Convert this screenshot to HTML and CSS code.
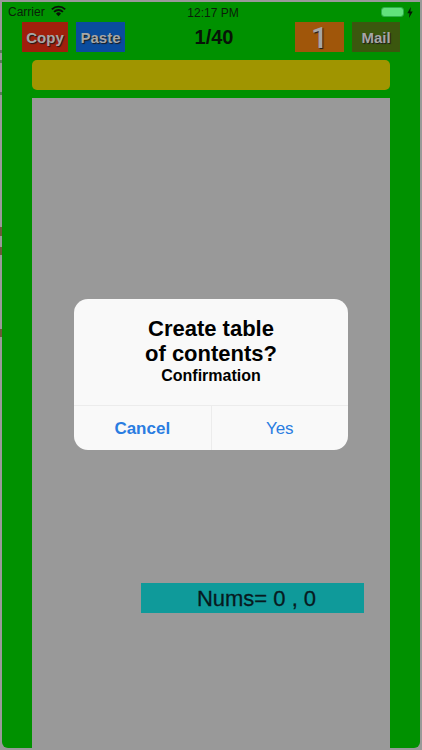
FILE: index.html
```html
<!DOCTYPE html>
<html lang="en">
<head>
<meta charset="utf-8">
<title>Create table of contents</title>
<link rel="stylesheet" href="styles.css">
</head>
<body>
<div class="edge-marks"></div>
<div class="screen">
  <div class="status">
    <div class="status-left">
      <span>Carrier</span>
      <svg class="wifi" viewBox="0 0 16 12" width="15" height="12"><path d="M8 11.6 5.3 8.8a3.8 3.8 0 0 1 5.4 0Z" fill="#071407"/><path d="M3.3 6.9a6.6 6.6 0 0 1 9.4 0" fill="none" stroke="#071407" stroke-width="2"/><path d="M.9 4.3a10 10 0 0 1 14.2 0" fill="none" stroke="#071407" stroke-width="2"/></svg>
    </div>
    <div class="status-time">12:17 PM</div>
    <div class="status-right">
      <span class="battery"><span class="battery-fill"></span></span>
      <svg class="bolt" viewBox="0 0 6 11" width="6" height="11"><path d="M3.8 0 .3 6.2h2.2L2 11l3.7-6.6H3.4Z" fill="#071407"/></svg>
    </div>
  </div>
  <div class="toolbar">
    <div class="tool-group">
      <div class="btn btn-copy">Copy</div>
      <div class="btn btn-paste">Paste</div>
    </div>
    <div class="counter">1/40</div>
    <div class="tool-group">
      <div class="btn btn-one">1</div>
      <div class="btn btn-mail">Mail</div>
    </div>
  </div>
  <div class="title-bar"></div>
  <div class="panel">
    <div class="nums">Nums= 0 , 0</div>
  </div>
</div>
<div class="alert">
  <div class="alert-body">
    <div class="alert-title">Create table<br>of contents?</div>
    <div class="alert-msg">Confirmation</div>
  </div>
  <div class="alert-actions">
    <div class="action action-cancel">Cancel</div>
    <div class="action">Yes</div>
  </div>
</div>
</body>
</html>
```
FILE: styles.css
```css
* { box-sizing: border-box; }
html, body { margin: 0; height: 100%; }
body {
  background: #999999;
  font-family: "Liberation Sans", Arial, sans-serif;
  padding: 2px;
  overflow: hidden;
}
.edge-marks {
  position: absolute;
  left: 0;
  top: 0;
  width: 2px;
  height: 750px;
  background:
    linear-gradient(#6b5a3a, #6b5a3a) 0 227px / 2px 9px no-repeat,
    linear-gradient(#6b5a3a, #6b5a3a) 0 247px / 2px 8px no-repeat,
    linear-gradient(#6b5a3a, #6b5a3a) 0 329px / 2px 8px no-repeat,
    linear-gradient(#5a7a5a, #5a7a5a) 0 50px / 2px 3px no-repeat,
    linear-gradient(#5a7a5a, #5a7a5a) 0 60px / 2px 3px no-repeat,
    linear-gradient(#5a7a5a, #5a7a5a) 0 92px / 2px 3px no-repeat;
}
.screen {
  height: 746px;
  background: #009100;
  border-radius: 0 0 6px 6px;
  display: flex;
  flex-direction: column;
  padding: 0 30px;
  overflow: hidden;
}
.status {
  height: 20px;
  margin: 0 -30px;
  padding: 0 7px 0 6px;
  display: flex;
  align-items: center;
  position: relative;
  justify-content: space-between;
  font-size: 12px;
  color: #0a1f0a;
  flex: none;
}
.status-left { display: flex; align-items: center; gap: 6px; }
.wifi { margin-top: -3px; }
.status-time { position: absolute; left: 4px; right: 0; text-align: center; top: 4px; }
.status-right { display: flex; align-items: center; gap: 3px; z-index: 1; }
.battery {
  width: 23px;
  height: 10px;
  border: 1px solid #2fb04a;
  border-radius: 3px;
  display: block;
}
.battery-fill { display: block; height: 100%; background: #62e27c; border-radius: 2px; }
.toolbar {
  margin: 0 -10px;
  height: 30px;
  display: flex;
  justify-content: space-between;
  align-items: center;
  flex: none;
  position: relative;
}
.tool-group { display: flex; gap: 8px; }
.btn {
  height: 30px;
  display: flex;
  align-items: center;
  justify-content: center;
  font-weight: 700;
  font-size: 15px;
  color: #a6a6a6;
  text-shadow: 1px 1px 1px #1a1a1a;
}
.btn-copy { width: 46px; background: #a01f0c; }
.btn-paste { width: 49px; background: #0a4c9e; }
.btn-one { width: 49px; background: #a0560a; font-family: Roboto, "Liberation Sans", sans-serif; font-size: 30px; font-weight: 500; }
.btn-mail { width: 48px; background: #3b570e; }
.counter { font-size: 20px; font-weight: 700; color: #071407; position: absolute; left: 158px; width: 68px; text-align: center; }
.title-bar {
  margin-top: 8px;
  height: 30px;
  background: #a09500;
  border-radius: 5px;
  flex: none;
}
.panel {
  margin-top: 8px;
  flex: 1;
  background: #999999;
  padding-top: 485px;
  padding-left: 109px;
  padding-right: 26px;
}
.nums {
  height: 30px;
  background: #0f9a9a;
  color: #071a1f;
  font-size: 22px;
  font-weight: 400;
  -webkit-text-stroke: 0.3px #071a1f;
  padding: 2px 0 0 8px;
  display: flex;
  align-items: center;
  justify-content: center;
}
.alert {
  position: absolute;
  left: 74px;
  top: 299px;
  width: 274px;
  height: 151px;
  background: #f9f9f9;
  border-radius: 14px;
  display: flex;
  flex-direction: column;
  overflow: hidden;
}
.alert-body { flex: 1; padding-top: 17px; text-align: center; color: #000; }
.alert-title { font-size: 22px; font-weight: 700; line-height: 25px; }
.alert-msg { font-size: 16px; font-weight: 700; line-height: 18px; margin-top: 1px; }
.alert-actions { height: 45px; flex: none; display: flex; border-top: 1px solid #ececec; padding-top: 1px; }
.action {
  flex: 1;
  display: flex;
  align-items: center;
  justify-content: center;
  color: #2a7de1;
  font-size: 17px;
}
.action-cancel { font-weight: 700; border-right: 1px solid #ececec; margin-top: -1px; padding-top: 1px; }
```
